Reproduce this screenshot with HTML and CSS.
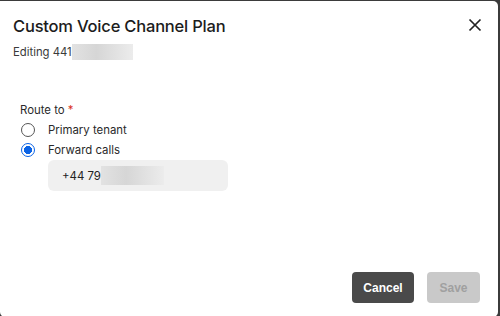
FILE: index.html
```html
<!DOCTYPE html>
<html lang="en">
<head>
    <meta charset="UTF-8">
    <title>Custom Voice Channel Plan</title>
    <link rel="stylesheet" href="styles.css">
</head>
<body>
    <div class="dialog">
        <div class="dialog-head">
            <div>
                <h1 class="title">Custom Voice Channel Plan</h1>
                <p class="subtitle">Editing 441<span class="redact redact-sub"></span></p>
            </div>
            <button class="close" aria-label="Close">
                <svg width="14" height="14" viewBox="0 0 14 14"><path d="M1.5 1.5 L12.5 12.5 M12.5 1.5 L1.5 12.5" stroke="#222" stroke-width="1.7" fill="none"/></svg>
            </button>
        </div>

        <div class="form">
            <div class="label">Route to <span class="req">*</span></div>
            <label class="option"><span class="radio"></span>Primary tenant</label>
            <label class="option"><span class="radio checked"></span>Forward calls</label>
            <div class="phone">+44 79<span class="redact redact-phone"></span></div>
        </div>

        <div class="actions">
            <button class="btn btn-cancel">Cancel</button>
            <button class="btn btn-save" disabled>Save</button>
        </div>
    </div>
</body>
</html>
```

FILE: styles.css
```css
* {
    margin: 0;
    padding: 0;
    box-sizing: border-box;
}

html, body {
    height: 100%;
}

body {
    background: #3b3b3b;
    font-family: Inter, "Noto Sans", sans-serif;
    color: #222;
    padding: 1px 2px 0 0;
    overflow: hidden;
}

.dialog {
    background: #fff;
    height: 316px;
    border-radius: 0 5px 5px 5px;
    display: flex;
    flex-direction: column;
}

.dialog-head {
    display: flex;
    justify-content: space-between;
    padding: 14px 16px 0 13px;
}

.title {
    font-size: 16.5px;
    font-weight: 500;
    color: #1c1c1c;
    letter-spacing: -0.2px;
    line-height: 22px;
}

.subtitle {
    font-size: 11.3px;
    color: #3a3a3a;
    margin-top: 7px;
    line-height: 16px;
    display: flex;
    align-items: center;
}

.redact {
    display: inline-block;
    background: linear-gradient(90deg, #e2e2e2, #d6d6d6 40%, #ececec);
}

.redact-sub {
    width: 61px;
    height: 16px;
}

.close {
    background: none;
    border: none;
    margin-top: 3px;
    width: 14px;
    height: 14px;
    cursor: pointer;
}

.form {
    padding: 42px 0 0 20px;
    font-size: 11.4px;
    color: #2a2a2a;
}

.label {
    line-height: 16px;
}

.req {
    color: #d93025;
}

.option {
    display: flex;
    align-items: center;
    gap: 13px;
    height: 20px;
    margin-top: 2px;
    padding-left: 1px;
}

.option + .option {
    margin-top: 0;
}

.radio {
    width: 14px;
    height: 14px;
    border-radius: 50%;
    border: 1.3px solid #555;
}

.radio.checked {
    border-color: #0b63e5;
    background: radial-gradient(circle, #0b63e5 0 3.8px, #fff 4.3px);
}

.phone {
    margin: 0 0 0 28px;
    width: 180px;
    height: 31px;
    background: #f0f0f0;
    border-radius: 6px;
    display: flex;
    align-items: center;
    padding-left: 14px;
    font-size: 11.4px;
    color: #222;
}

.redact-phone {
    width: 63px;
    height: 19px;
}

.actions {
    margin-top: auto;
    display: flex;
    justify-content: flex-end;
    gap: 13px;
    padding: 0 18px 14px 0;
}

.btn {
    height: 31px;
    border: none;
    border-radius: 4px;
    font-family: "Liberation Sans", Arial, sans-serif;
    font-size: 12px;
    font-weight: bold;
}

.btn-cancel {
    width: 62px;
    background: #4a4a4a;
    color: #fff;
}

.btn-save {
    width: 53px;
    background: #c9c9c9;
    color: #a0a0a0;
}
```
